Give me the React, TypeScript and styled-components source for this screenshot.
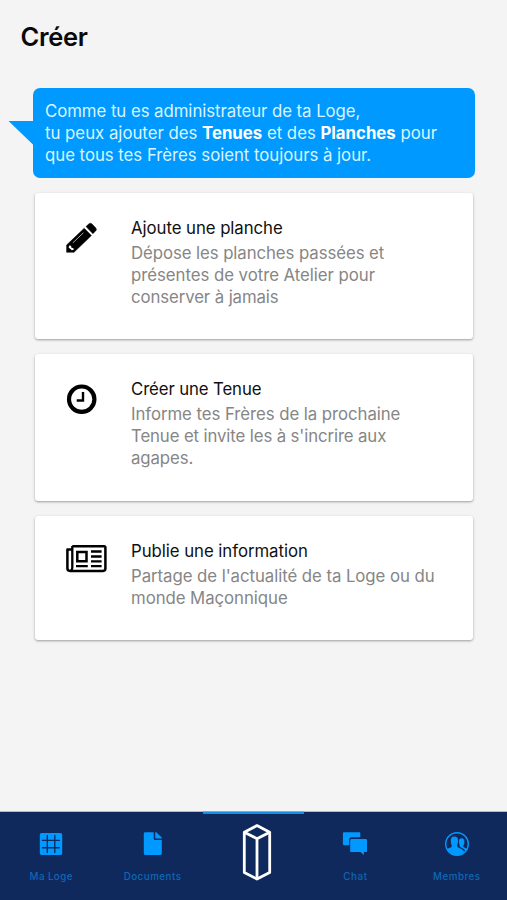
import React from "react";
import styled, { createGlobalStyle } from "styled-components";

const GlobalStyle = createGlobalStyle`
  * { box-sizing: border-box; }
  html, body { margin: 0; padding: 0; }
  body { background: #f4f4f4; font-family: Inter, "Liberation Sans", sans-serif; }
`;

const Screen = styled.div`
  display: flex;
  flex-direction: column;
  width: 507px;
  height: 900px;
  overflow: hidden;
  background: #f4f4f4;
`;

const Title = styled.h1`
  margin: 0;
  padding: 21px 0 0 20.5px;
  height: 88px;
  font-size: 25.5px;
  line-height: 32px;
  font-weight: 600;
  letter-spacing: -0.3px;
  color: #0a0a0a;
`;

const Content = styled.main`
  flex: 1;
  min-height: 0;
`;

const Bubble = styled.section`
  position: relative;
  width: 442px;
  height: 90px;
  margin-left: 33px;
  padding: 12px 12px 0;
  border-radius: 7px;
  background: #0099ff;
  color: #d9f5ff;

  &::before {
    content: "";
    position: absolute;
    left: -25px;
    top: 32.5px;
    width: 26px;
    height: 25px;
    background: #0099ff;
    clip-path: polygon(0 0, 100% 0, 100% 100%);
  }
`;

const Line = styled.div<{ $spacing?: number }>`
  font-size: 16.8px;
  line-height: 22px;
  white-space: nowrap;
  letter-spacing: ${({ $spacing = 0 }) => $spacing}px;
`;

const Strong = styled.strong`
  font-weight: 700;
  color: #fff;
`;

const Cards = styled.div`
  display: flex;
  flex-direction: column;
  gap: 15px;
  width: 438px;
  margin: 15px 0 0 35px;
`;

const Card = styled.article<{ $height: number }>`
  display: flex;
  height: ${({ $height }) => $height}px;
  padding-top: 24px;
  border-radius: 3px;
  background: #fff;
  box-shadow: 0 1px 2.5px rgba(0, 0, 0, 0.36);
`;

const CardIcon = styled.div<{ $offset: number }>`
  flex: 0 0 96px;
  padding: ${({ $offset }) => $offset}px 0 0 31px;
  svg { display: block; }
`;

const CardTitle = styled(Line)`
  color: #101010;
  margin-bottom: 3px;
`;

const CardText = styled.div`
  color: #868686;
`;

const TabBar = styled.nav`
  display: grid;
  grid-template-columns: repeat(5, 1fr);
  height: 88px;
  background: #0f295c;
  box-shadow: 0 -1px 0 #b3bac5;
`;

const Tab = styled.div<{ $active?: boolean }>`
  display: flex;
  flex-direction: column;
  align-items: center;
  padding-top: ${({ $active }) => ($active ? 9 : 19)}px;
  padding-left: ${({ $active }) => ($active ? 7 : 1)}px;
  box-shadow: ${({ $active }) =>
    $active ? "inset 0 2px 0 #118fec, 0 -1px 0 #55b5f5" : "none"};
  color: #0099ff;
  svg { display: block; }
`;

const TabLabel = styled.span<{ $spacing: number }>`
  margin-top: 13px;
  font-size: 9.8px;
  line-height: 14px;
  font-weight: 500;
  letter-spacing: ${({ $spacing }) => $spacing}px;
  white-space: nowrap;
  color: #0d67b5;
`;

const Pencil = () => (
  <svg width="34" height="34" viewBox="0 0 34 34">
    <path d="M.6 31.3V24L18.2 7.3l7.2 7.3L8 31.3zM20 5.5l3-2.7q1.4-1.2 2.8 0l4 4.1q1.3 1.4 0 2.8l-2.9 3z" fill="#000" stroke="#000" strokeWidth=".5" strokeLinejoin="round" />
    <path d="M6.9 21.8 17.4 11.8" stroke="#bbb" strokeWidth=".9" />
    <path d="m2.6 26.5.7-2 1.7.2.5 2 2 .5.2 1.5-1.8.6z" fill="#fff" />
  </svg>
);

const Clock = () => (
  <svg width="34" height="34" viewBox="0 0 34 34" fill="none" stroke="#000">
    <circle cx="15.7" cy="16.2" r="12.7" strokeWidth="4.2" />
    <path d="M17 9v8.5h-6.3" strokeWidth="2.4" />
  </svg>
);

const Newspaper = () => (
  <svg width="42" height="34" viewBox="0 0 42 34" fill="none" stroke="#000">
    <path d="M6.3 4.2H38q1.4 0 1.4 1.4v21q0 2.3-2.3 2.3H4q-2.6 0-2.6-2.6V7.4h4.9" strokeWidth="2.5" strokeLinejoin="round" />
    <path d="M6.3 4v21.5q0 2-1.5 3.4" strokeWidth="2.3" />
    <path d="M11.3 10h9.2v9.2h-9.2z" strokeWidth="2.5" />
    <path d="M25 9.5h10.6M25 14.5h10.6M25 19.4h10.6M10 24.2h11.8M25 24.2h10.6" strokeWidth="2.3" />
  </svg>
);

const GridIcon = () => (
  <svg width="24" height="26" viewBox="0 0 24 26">
    <rect x=".8" y="2" width="22.4" height="22" rx="1.8" fill="currentColor" />
    <path d="M8.3 4.5v17M15.8 4.5v17M3.4 9.3h17M3.4 16.7h17" stroke="#0f295c" strokeWidth="1.35" strokeLinecap="round" />
  </svg>
);

const DocumentIcon = () => (
  <svg width="20" height="26" viewBox="0 0 20 26" fill="currentColor">
    <path d="M2.2 1.2h8.5v6.2q0 1.5 1.5 1.5h6.6v13.6q0 1.4-1.4 1.4H2.2q-1.4 0-1.4-1.4V2.6q0-1.4 1.4-1.4z" />
    <path d="M12.2 1.2h1l5.6 5.3v1h-5.4q-1.2 0-1.2-1.2z" />
  </svg>
);

const ChatIcon = () => (
  <svg width="26" height="26" viewBox="0 0 26 26" fill="currentColor">
    <path d="M2 1.2h15.2q1.1 0 1.1 1.1v3.9H10q-2.8 0-2.8 2.8v5.2H2q-1.1 0-1.1-1.1V2.3q0-1.1 1.1-1.1z" />
    <path d="M9.4 8h14.4q1.2 0 1.2 1.2v10.7q0 1.2-1.2 1.2h-1.9v3l-3.5-3h-9q-1.2 0-1.2-1.2V9.2Q8.2 8 9.4 8z" />
  </svg>
);

const MembersIcon = () => (
  <svg width="26" height="26" viewBox="0 0 26 26">
    <circle cx="13" cy="13" r="11.3" fill="none" stroke="currentColor" strokeWidth="1.4" />
    <path d="M3 17.8c2.2-.8 4.3-1 4.8-2.3.3-1-.8-2.1-1-5-.2-3.1 1-4.9 3.7-4.9s3.8 1.8 3.5 4.9c-.2 2.8-1.2 4-.8 5 .6 1.4 5.5 2 7 5.5C15 26.5 5.2 25.4 3 17.8z" fill="currentColor" />
    <path d="M22.8 17.6c-2-.8-3.2-1-3.5-2-.2-.8 1.1-1.9 1.1-4.5 0-2.4-.8-3.8-2.7-3.8-2.1 0-2.9 1.5-2.8 3.8.1 2.4 1.1 3.2.7 4.6 2.4.9 4.7 2 5.6 4.4z" fill="currentColor" />
  </svg>
);

const Pillar = () => (
  <svg width="30" height="60" viewBox="0 0 30 60" fill="none" stroke="#fff" strokeWidth="2.8" strokeLinejoin="round">
    <path d="M15 4.6 27.7 11.2V51.5L15 58 2.3 51.5V11.2z" />
    <path d="M2.3 11.2 15 17.7l12.7-6.5M15 17.7V58" />
  </svg>
);

type CardData = {
  icon: React.ReactNode;
  iconOffset: number;
  height: number;
  title: string;
  titleSpacing: number;
  lines: [string, number][];
};

const cards: CardData[] = [
  {
    icon: <Pencil />, iconOffset: 4, height: 146, title: "Ajoute une planche", titleSpacing: -0.06,
    lines: [["Dépose les planches passées et", -0.08], ["présentes de votre Atelier pour", -0.04], ["conserver à jamais", -0.1]],
  },
  {
    icon: <Clock />, iconOffset: 5, height: 147, title: "Créer une Tenue", titleSpacing: -0.12,
    lines: [["Informe tes Frères de la prochaine", -0.06], ["Tenue et invite les à s'incrire aux", -0.12], ["agapes.", -0.1]],
  },
  {
    icon: <Newspaper />, iconOffset: 2, height: 124, title: "Publie une information", titleSpacing: -0.05,
    lines: [["Partage de l'actualité de ta Loge ou du", -0.06], ["monde Maçonnique", -0.06]],
  },
];

export default function App() {
  return (
    <Screen>
      <GlobalStyle />
      <Title>Créer</Title>
      <Content>
        <Bubble>
          <Line $spacing={-0.05}>Comme tu es administrateur de ta Loge,</Line>
          <Line $spacing={-0.01}>tu peux ajouter des <Strong>Tenues</Strong> et des <Strong>Planches</Strong> pour</Line>
          <Line $spacing={-0.03}>que tous tes Frères soient toujours à jour.</Line>
        </Bubble>
        <Cards>
          {cards.map((card) => (
            <Card key={card.title} $height={card.height}>
              <CardIcon $offset={card.iconOffset}>{card.icon}</CardIcon>
              <div>
                <CardTitle $spacing={card.titleSpacing}>{card.title}</CardTitle>
                <CardText>
                  {card.lines.map(([text, spacing]) => (
                    <Line key={text} $spacing={spacing}>{text}</Line>
                  ))}
                </CardText>
              </div>
            </Card>
          ))}
        </Cards>
      </Content>
      <TabBar>
        <Tab><GridIcon /><TabLabel $spacing={0.4}>Ma Loge</TabLabel></Tab>
        <Tab><DocumentIcon /><TabLabel $spacing={0.5}>Documents</TabLabel></Tab>
        <Tab $active><Pillar /></Tab>
        <Tab><ChatIcon /><TabLabel $spacing={0.6}>Chat</TabLabel></Tab>
        <Tab><MembersIcon /><TabLabel $spacing={0.5}>Membres</TabLabel></Tab>
      </TabBar>
    </Screen>
  );
}
